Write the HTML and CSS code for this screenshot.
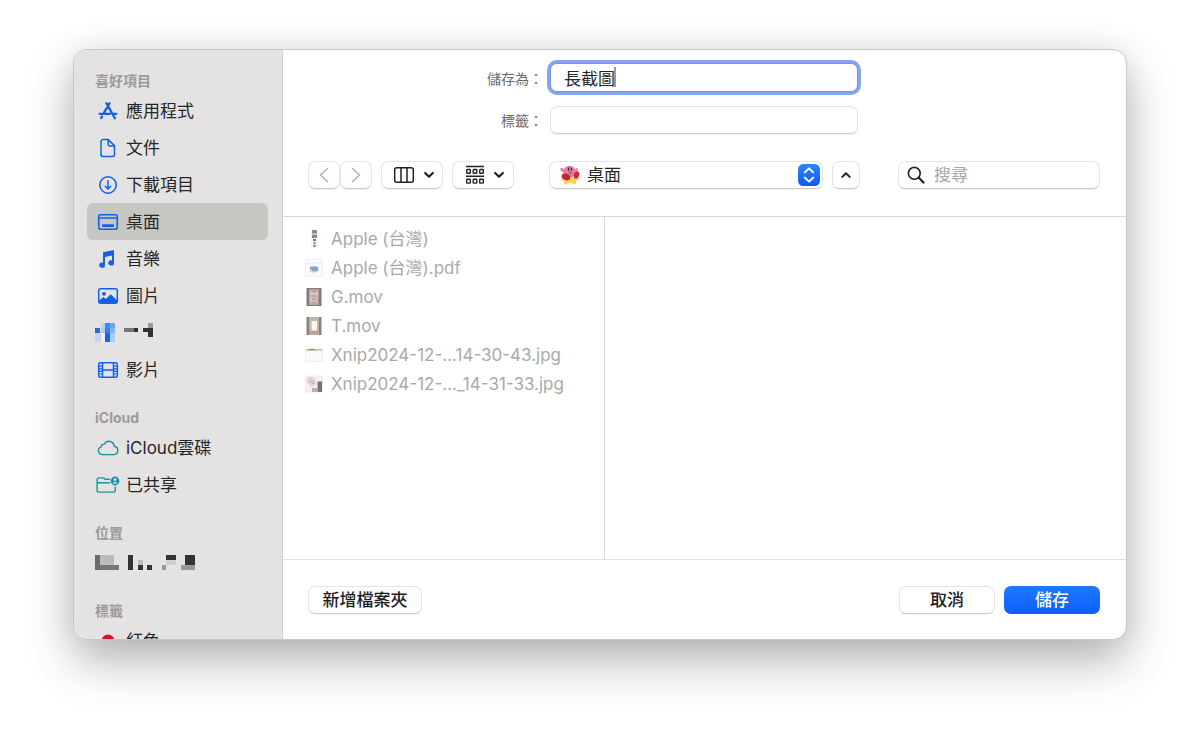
FILE: index.html
```html
<!DOCTYPE html>
<html lang="zh-Hant">
<head>
<meta charset="utf-8">
<meta name="viewport" content="width=device-width, initial-scale=1">
<title>儲存</title>
<link rel="stylesheet" href="styles.css">
</head>
<body>
<form class="dialog" onsubmit="return false">
  <nav class="sidebar">
    <section>
      <h2 class="group-title">喜好項目</h2>
      <a class="place" href="#"><svg class="icon blue" viewBox="0 0 22 22"><g fill="none" stroke="currentColor" stroke-width="2.300" stroke-linecap="round"><path d="M9.300 3.200 16 14.800 17.900 18.300M12.500 3.200 6.500 13.600M5 16.500l-.9 1.600M2.600 13.800h10.200M16 13.800h3.400"/></g></svg>應用程式</a>
      <a class="place" href="#"><svg class="icon blue" viewBox="0 0 22 22"><g fill="none" stroke="currentColor" stroke-width="1.500" stroke-linejoin="round"><path d="M6 2.600h5.200l6.300 6.300v8.600a2 2 0 0 1-2 2H6a2 2 0 0 1-2-2V4.600a2 2 0 0 1 2-2z"/><path d="M11.200 2.800V7.400a1.500 1.500 0 0 0 1.500 1.500h4.600"/></g></svg>文件</a>
      <a class="place" href="#"><svg class="icon blue" viewBox="0 0 22 22"><g fill="none" stroke="currentColor" stroke-width="1.500" stroke-linecap="round" stroke-linejoin="round"><circle cx="11" cy="11" r="8.200"/><path d="M11 6.800v8M8.200 12.200l2.800 2.800 2.800-2.800"/></g></svg>下載項目</a>
      <a class="place selected" href="#" aria-current="page"><svg class="icon blue" viewBox="0 0 22 22"><rect x="1.700" y="3.700" width="18.600" height="14.600" rx="2" fill="none" stroke="currentColor" stroke-width="1.600"/><path d="M2 7h18" stroke="currentColor" stroke-width="1.400"/><rect x="5" y="13.300" width="12" height="2.800" rx=".8" fill="currentColor"/></svg>桌面</a>
      <a class="place" href="#"><svg class="icon blue" viewBox="0 0 22 22"><path fill="currentColor" d="M6 4.200 17 2V15a2.900 2.600 0 1 1-2-2.500V7.400L8 8.900V17.200a2.900 2.600 0 1 1-2-2.500z"/></svg>音樂</a>
      <a class="place" href="#"><svg class="icon blue" viewBox="0 0 22 22"><rect x="1.700" y="3.700" width="18.600" height="14.600" rx="2" fill="none" stroke="currentColor" stroke-width="1.500"/><circle cx="7" cy="8.800" r="1.900" fill="currentColor"/><path fill="currentColor" d="M2 15.500 6.500 12l2.300 2 4.900-4.800 6.500 6.200V18H2z"/></svg>圖片</a>
      <a class="place redacted" href="#" aria-label="個人檔案夾"><svg width="58" height="19" viewBox="0 0 58 19" shape-rendering="crispEdges"><path fill="#c3d4ee" d="M6 0h4v5H6zM0 10h6v9H0z"/><path fill="#4a86e6" d="M10 0h5v5h-5z"/><path fill="#6fa2ee" d="M15 0h5v5h-5z"/><path fill="#2a66dc" d="M0 5h5v5H0z"/><path fill="#a9ccf7" d="M6 5h4v5H6zM15 10h5v9h-5z"/><path fill="#85b4f4" d="M15 5h5v5h-5z"/><path fill="#3f7fe8" d="M10 5h5v5h-5z"/><path fill="#e8eef9" d="M6 10h4v9H6z"/><path fill="#1763ec" d="M10 10h5v9h-5z"/><path fill="#777" d="M29 5h10v4H29z"/><path fill="#333" d="M39 5h4v4h-4zM48 5h10v4H48zM53 9h5v5h-5z"/><path fill="#999" d="M53 0h5v5h-5z"/></svg></a>
      <a class="place" href="#"><svg class="icon blue" viewBox="0 0 22 22"><g fill="none" stroke="currentColor" stroke-width="1.500"><rect x="1.700" y="3.700" width="18.600" height="14.600" rx="1.500"/><path d="M5.500 4v14M16.500 4v14M5.500 11h11"/><path stroke-width="1.200" d="M2 7.200h3.500M2 9.800h3.500M2 12.400h3.500M2 15h3.500M16.500 7.200H20M16.500 9.800H20M16.500 12.400H20M16.500 15H20"/></g></svg>影片</a>
    </section>
    <section>
      <h2 class="group-title">iCloud</h2>
      <a class="place" href="#"><svg class="icon teal" viewBox="0 0 22 22"><path fill="none" stroke="currentColor" stroke-width="1.400" stroke-linejoin="round" d="M5 17.600a4 4 0 0 1-.8-7.800 3 3 0 0 1 3.200-2.700 5.200 5.200 0 0 1 9.800 2.200 4.200 4.200 0 0 1 0 8.300z"/></svg>iCloud雲碟</a>
      <a class="place" href="#"><svg class="icon teal" viewBox="0 0 22 22"><g fill="none" stroke="currentColor" stroke-width="1.400" stroke-linejoin="round"><path d="M13 5.200H8.200L6.800 3.900H1.900A1.800 1.800 0 0 0 .1 5.700v10.600a1.800 1.800 0 0 0 1.800 1.800h14.600a1.800 1.800 0 0 0 1.800-1.800V12.800M.1 8.700H13"/></g><circle cx="18" cy="7" r="4.400" fill="currentColor"/><circle cx="18" cy="5.600" r="1.400" fill="#e4e2e3"/><path d="M15.500 9.400q2.500-3.200 5 0z" fill="#e4e2e3"/></svg>已共享</a>
    </section>
    <section>
      <h2 class="group-title">位置</h2>
      <a class="place redacted" href="#" aria-label="磁碟"><svg width="100" height="15" viewBox="0 0 100 15" shape-rendering="crispEdges"><path fill="#6b6a6b" d="M0 0h5v15H0z"/><path fill="#bbb" d="M5 0h14v10H5zM43 5h5v5h-5z"/><path fill="#777" d="M5 10h19v5H5z"/><path fill="#333" d="M33 0h5v15h-5zM43 10h5v5h-5zM52 10h5v5h-5zM71 0h10v5H71zM90 0h10v10H90z"/><path fill="#999" d="M67 10h4v5h-4zM86 10h14v5H86z"/><path fill="#d0cfd0" d="M71 5h10v5H71z"/></svg></a>
    </section>
    <section>
      <h2 class="group-title">標籤</h2>
      <a class="place" href="#"><svg class="icon" viewBox="0 0 22 22"><circle cx="11" cy="11" r="6.500" fill="#d9122a"/></svg>紅色</a>
    </section>
  </nav>

  <main class="content">
    <header class="head">
      <div class="fields">
        <label for="name">儲存為：</label>
        <div class="name-box"><input class="field focused" id="name" type="text" value="長截圖"><span class="caret"></span></div>
        <label for="tags">標籤：</label>
        <input class="field" id="tags" type="text">
      </div>
      <div class="toolbar">
        <div class="history">
          <button class="control" type="button" aria-label="上一頁"><svg width="12" height="18" viewBox="0 0 12 18"><path d="M9.500 2.500 2.500 9l7 6.500" fill="none" stroke="#b4b4b4" stroke-width="1.600" stroke-linecap="round"/></svg></button>
          <button class="control" type="button" aria-label="下一頁"><svg width="12" height="18" viewBox="0 0 12 18"><path d="M2.500 2.500 9.500 9l-7 6.500" fill="none" stroke="#b4b4b4" stroke-width="1.600" stroke-linecap="round"/></svg></button>
        </div>
        <button class="control menu" type="button" aria-label="直欄"><svg width="22" height="18" viewBox="0 0 22 18"><g fill="none" stroke="#222" stroke-width="1.500"><rect x="1.700" y="1.700" width="18.600" height="14.600" rx="2"/><path d="M8 2v14M14 2v14"/></g></svg><svg width="10" height="8" viewBox="0 0 10 8"><path d="M1.200 2 5 5.800 8.800 2" fill="none" stroke="#222" stroke-width="2.200" stroke-linecap="round" stroke-linejoin="round"/></svg></button>
        <button class="control menu" type="button" aria-label="群組"><svg width="20" height="20" viewBox="0 0 20 20"><g fill="none" stroke="#222" stroke-width="1.400"><path d="M1 1.500h18M1 11.200h18"/><rect x="1.700" y="4.500" width="3.600" height="3.800" rx=".6"/><rect x="8.200" y="4.500" width="3.600" height="3.800" rx=".6"/><rect x="14.700" y="4.500" width="3.600" height="3.800" rx=".6"/><rect x="1.700" y="14.300" width="3.600" height="3.800" rx=".6"/><rect x="8.200" y="14.300" width="3.600" height="3.800" rx=".6"/><rect x="14.700" y="14.300" width="3.600" height="3.800" rx=".6"/></g></svg><svg width="10" height="8" viewBox="0 0 10 8"><path d="M1.200 2 5 5.800 8.800 2" fill="none" stroke="#222" stroke-width="2.200" stroke-linecap="round" stroke-linejoin="round"/></svg></button>
        <div class="location">
          <select class="control" aria-label="位置"><option>桌面</option></select>
          <svg class="folder-art" viewBox="0 0 20 20"><path d="M.5 14.500 6 12.500 14 12.500 19.800 13 16.500 15.500 15.500 19.500 10 17.800 4 19.600 4.300 16.500z" fill="#f7d24a"/><ellipse cx="2.800" cy="5.200" rx="2.900" ry="1.700" transform="rotate(40 2.800 5.200)" fill="#e67fa0"/><circle cx="9.500" cy="6.800" r="6" fill="#e67b9e"/><ellipse cx="16.300" cy="5.500" rx="1.800" ry="2.500" transform="rotate(30 16.300 5.500)" fill="#ea8fae"/><ellipse cx="6" cy="11.800" rx="4.500" ry="3.200" transform="rotate(25 6 11.800)" fill="#bf2438"/><ellipse cx="16.500" cy="10" rx="2.700" ry="3.800" transform="rotate(20 16.500 10)" fill="#cc2b3f"/><path d="M8.500 3v2.400M11.300 3v2.400" stroke="#2b2a52" stroke-width="1.100" stroke-linecap="round"/><path d="M9.200 7.200h2.400l-1.200 1.700z" fill="#9c1b35"/></svg>
          <svg class="stepper" viewBox="0 0 21 21"><defs><linearGradient id="step" x2="0" y2="1"><stop stop-color="#2f83fa"/><stop offset="1" stop-color="#0a5df0"/></linearGradient></defs><rect width="21" height="21" rx="5" fill="url(#step)"/><path d="M6.500 8 10.500 4.200 14.500 8M6.500 13l4 3.800 4-3.800" fill="none" stroke="#fff" stroke-width="1.900" stroke-linecap="round" stroke-linejoin="round"/></svg>
        </div>
        <button class="control collapse" type="button" aria-label="收合"><svg width="10" height="8" viewBox="0 0 10 8"><path d="M1.300 5.900 5 2.300l3.700 3.600" fill="none" stroke="#222" stroke-width="2" stroke-linecap="round" stroke-linejoin="round"/></svg></button>
        <div class="search">
          <input class="field" type="search" placeholder="搜尋" aria-label="搜尋">
          <svg class="lens" viewBox="0 0 18 18"><circle cx="7.300" cy="7.300" r="5.900" fill="none" stroke="#222" stroke-width="1.600"/><path d="m11.800 11.800 4.700 4.700" stroke="#222" stroke-width="2.200" stroke-linecap="round"/></svg>
        </div>
      </div>
    </header>

    <div class="browser">
      <ul class="files">
        <li><svg class="thumb" viewBox="0 0 18 18"><path d="M6 0h7v18H6z" fill="#f5f5f5"/><path d="M7 0h5v3.500H7zM7 4.500h5V8H7z" fill="#8b8c90"/><path d="M8 9h3v2H8zM8.500 12h2v1.500h-2zM8.500 14.500h2v2.500h-2z" fill="#77787c"/></svg>Apple (台灣)</li>
        <li><svg class="thumb" viewBox="0 0 18 18"><path d="M.5.5h17v17H.5z" fill="#fafbfc" stroke="#f0f0f2"/><path d="M1 4h16" stroke="#e6ebf4"/><ellipse cx="9" cy="10" rx="4.500" ry="3.500" fill="#bcd0ee"/><path d="M5 9h8M7 11h6" stroke="#5f7196" stroke-width="1.200"/></svg>Apple (台灣).pdf</li>
        <li><svg class="thumb" viewBox="0 0 18 18"><path d="M1.500 0h15v18h-15z" fill="#7f7b77"/><path d="M4 1h10v16H4z" fill="#b9a5a1"/><path d="m5 3 4 2 4-2-1 12-3-2-4 2z" fill="#d8c3c0"/><path d="M6 8h6M7 11h4" stroke="#a58782"/></svg>G.mov</li>
        <li><svg class="thumb" viewBox="0 0 18 18"><path d="M1.500 0h15v18h-15z" fill="#87837a"/><path d="M4 0h10v18H4z" fill="#c2b3a8"/><path d="M6.500 4h5.500v9.500H6.500z" fill="#faf6f1"/><path d="M4 14h9v3H4z" fill="#bda39b"/></svg>T.mov</li>
        <li><svg class="thumb" viewBox="0 0 18 18"><path d="M.5 3h17v12.500H.5z" fill="#f9f9f8" stroke="#f0f0ee"/><path d="M1 3h16v2H1z" fill="#c9cbb9"/><path d="M4 3.500h6" stroke="#85876f"/></svg>Xnip2024-12-...14-30-43.jpg</li>
        <li><svg class="thumb" viewBox="0 0 18 18"><path d="M.5 1h17v16H.5z" fill="#f3f1f4" stroke="#eeedf0"/><path d="M2 3q4-2 8 0l1 7-4 2-5-4z" fill="#e3d3db"/><path d="M4 6l5 3M6 4l4 5" stroke="#c7b1bd"/><path d="M12.500 6.500h4.500V17h-4.500z" fill="#747278"/><path d="M7 13h5.500v4H7z" fill="#b9aeb7"/></svg>Xnip2024-12-..._14-31-33.jpg</li>
      </ul>
      <div class="preview"></div>
    </div>

    <footer class="actions">
      <button class="control new-folder" type="button">新增檔案夾</button>
      <button class="control wide" type="button">取消</button>
      <button class="primary wide" type="submit">儲存</button>
    </footer>
  </main>
</form>
</body>
</html>
```

FILE: styles.css
```css
* { box-sizing: border-box; }

body {
  margin: 0;
  height: 100vh;
  padding: 49px 73px 97px;
  display: flex;
  background: #fff;
  color: #262626;
  font: 17px/24px Inter, "Noto Sans CJK TC", sans-serif;
}

button, input, select { font: inherit; color: inherit; margin: 0; }

.dialog {
  flex: 1;
  display: flex;
  overflow: hidden;
  border: 1px solid #c6c6c6;
  border-radius: 14px;
  background: #fff;
  box-shadow: 0 22px 48px rgba(0, 0, 0, .28), 0 0 36px rgba(0, 0, 0, .08);
}

/* Sidebar */
.sidebar {
  width: 209px;
  flex: none;
  display: flex;
  flex-direction: column;
  gap: 18px;
  padding: 19px 14px 0 13px;
  overflow: hidden;
  border-right: 1px solid #d0cecf;
  background: #e4e2e3;
}

.group-title {
  margin: 0;
  padding-left: 8px;
  font-size: 14px;
  line-height: 23px;
  font-weight: 700;
  color: #9c9a9b;
}

.place {
  display: flex;
  align-items: center;
  gap: 7px;
  height: 37px;
  padding-left: 10px;
  border-radius: 6px;
  color: inherit;
  text-decoration: none;
}

.place.selected { background: #c6c6c3; }
.place.redacted { padding-left: 8px; }

.icon { width: 22px; height: 22px; flex: none; overflow: visible; }
.blue { color: #1560e8; }
.teal { color: #1c93a4; }

/* Main column */
.content {
  flex: 1;
  min-width: 0;
  display: flex;
  flex-direction: column;
}

.head {
  padding: 13px 26px 27px 25px;
  border-bottom: 1px solid #dadada;
}

.fields {
  display: grid;
  grid-template-columns: 1fr 308px 1fr;
  gap: 14px 7px;
  align-items: center;
}

.fields label {
  grid-column: 1;
  justify-self: end;
  padding-top: 2px;
  font-size: 14px;
  color: #6a6a6a;
}

.fields .field { display: block; width: 100%; }

.name-box { position: relative; }

.field, .control {
  height: 28px;
  border: 1px solid #e5e5e5;
  border-bottom-color: #cbcbcb;
  border-radius: 7px;
  background: #fff;
  box-shadow: 0 1px 1px rgba(0, 0, 0, .06);
  outline: none;
}

.field { padding: 0 13px; }

.field.focused {
  height: 29px;
  border-color: #7593e0;
  box-shadow: 0 0 0 3px #86a5ee;
}

.caret {
  position: absolute;
  top: 4px;
  left: 64px;
  width: 2px;
  height: 20px;
  background: #7b9ee8;
}

.toolbar {
  display: flex;
  gap: 9px;
  margin-top: 27px;
}

.control {
  display: flex;
  align-items: center;
  justify-content: center;
  padding: 0;
}

.history { display: flex; }
.history .control { width: 32px; }
.menu { width: 62px; gap: 9px; padding-left: 2px; }

.location {
  position: relative;
  flex: 1;
  margin-left: 26px;
}

.location select {
  width: 100%;
  padding: 0 36px 0 37px;
  appearance: none;
}

.folder-art {
  position: absolute;
  top: 4px;
  left: 11px;
  width: 20px;
  height: 20px;
}

.stepper {
  position: absolute;
  top: 3px;
  right: 3px;
  width: 22px;
  height: 22px;
}

.collapse { width: 28px; }

.search {
  position: relative;
  width: 202px;
  margin-left: 29px;
}

.search .field {
  width: 100%;
  padding-left: 35px;
  appearance: none;
}

.search .field::placeholder { color: #a6a6a6; opacity: 1; }

.lens {
  position: absolute;
  top: 5px;
  left: 9px;
  width: 18px;
  height: 18px;
}

/* File columns */
.browser {
  flex: 1;
  min-height: 0;
  display: flex;
}

.files {
  width: 322px;
  margin: 0;
  padding: 7px 22px;
  list-style: none;
  border-right: 1px solid #dadada;
  color: #a9a9a9;
}

.files li {
  display: flex;
  align-items: center;
  gap: 8px;
  height: 29px;
  white-space: nowrap;
}

.thumb { width: 18px; height: 18px; flex: none; }

.preview { flex: 1; }

/* Footer */
.actions {
  display: flex;
  align-items: center;
  gap: 9px;
  height: 80px;
  padding: 0 26px 0 25px;
  border-top: 1px solid #dfdfdf;
}

.actions button { font-weight: 500; color: #1d1d1d; }
.new-folder { width: 114px; margin-right: auto; }
.wide { width: 96px; }

.actions .primary {
  height: 28px;
  padding: 0;
  border: 0;
  border-radius: 7px;
  background: linear-gradient(#2079ff, #0b5ffb);
  color: #fff;
}
```
